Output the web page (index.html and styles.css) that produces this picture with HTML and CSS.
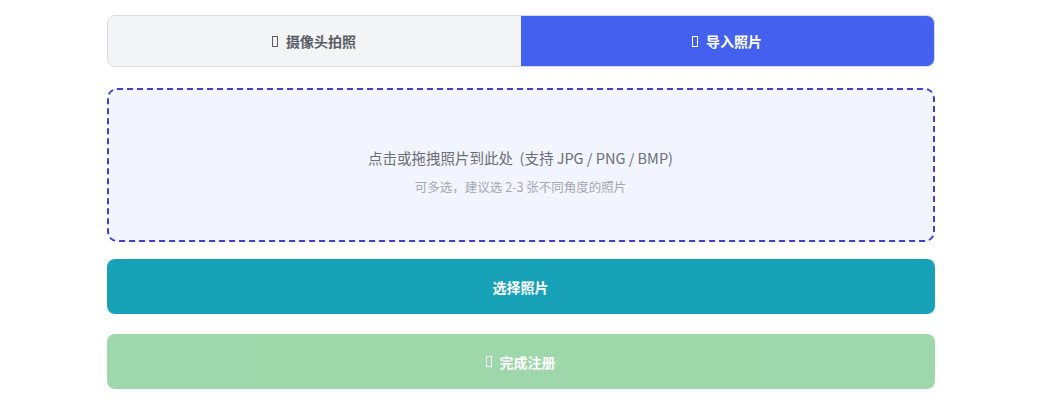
FILE: index.html
```html
<html>
<head>
<meta name="viewport" content="width=device-width, initial-scale=1">
<title>人脸注册</title>
<link rel="stylesheet" href="styles.css">
</head>
<body>
    <div class="panel">
        <div class="tabs">
            <button class="tab">
                <span class="tofu"></span>摄像头拍照
            </button>
            <button class="tab active">
                <span class="tofu"></span>导入照片
            </button>
        </div>

        <div class="dropzone">
            <p class="drop-main">点击或拖拽照片到此处&nbsp; (支持 JPG / PNG / BMP)</p>
            <p class="drop-hint">可多选，建议选 2-3 张不同角度的照片</p>
        </div>

        <button class="btn btn-info">选择照片</button>
        <button class="btn btn-success" disabled>
            <span class="tofu"></span>完成注册
        </button>
    </div>
</body>
</html>
```

FILE: styles.css
```css
body {
    margin: 0;
    padding: 0;
    background: #fff;
    font-family: "Noto Sans CJK SC", "Noto Sans", sans-serif;
}
.panel {
    width: 828px;
    margin: 0 auto;
    padding-top: 15px;
    display: flex;
    flex-direction: column;
}
.tabs {
    display: flex;
    height: 52px;
    border: 1px solid #d9dadd;
    border-radius: 8px;
    overflow: hidden;
    box-sizing: border-box;
}
.tab {
    flex: 1;
    border: none;
    background: #f3f4f6;
    color: #5b5e66;
    font-family: inherit;
    font-size: 14px;
    font-weight: bold;
    display: flex;
    align-items: center;
    justify-content: center;
    gap: 6px;
}
.tab.active {
    background: #4361ee;
    color: #fff;
}
/* missing emoji glyph box */
.tofu {
    display: inline-block;
    width: 6px;
    height: 11px;
    border: 1px solid currentColor;
    box-sizing: border-box;
    margin-right: 2px;
}
.dropzone {
    margin-top: 21px;
    height: 154px;
    box-sizing: border-box;
    border: 2px dashed #3f3fd2;
    border-radius: 10px;
    background: #f2f5fe;
    display: flex;
    flex-direction: column;
    align-items: center;
    justify-content: center;
    padding-top: 12px;
}
.drop-main {
    margin: 0;
    font-size: 14.5px;
    color: #6b6e75;
}
.drop-hint {
    margin: 9px 0 0;
    font-size: 12.5px;
    color: #a5a8ae;
}
.btn {
    height: 55px;
    border: none;
    border-radius: 8px;
    color: #fff;
    font-family: inherit;
    font-size: 14px;
    font-weight: bold;
    display: flex;
    align-items: center;
    justify-content: center;
    gap: 6px;
}
.btn-info {
    margin-top: 17px;
    background: #18a2b8;
}
.btn-success {
    margin-top: 20px;
    background: #28a745;
    opacity: 0.45;
}
```
